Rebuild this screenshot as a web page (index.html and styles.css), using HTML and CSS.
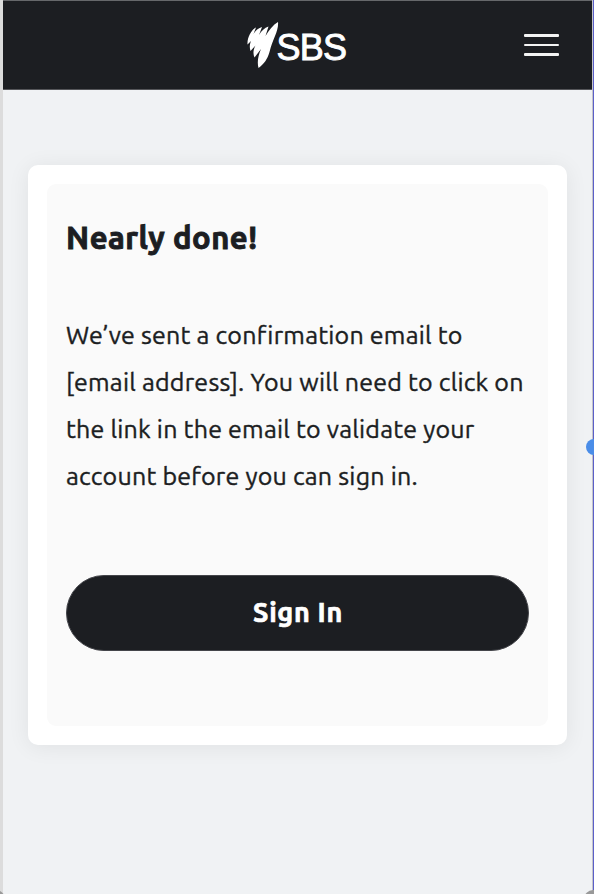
FILE: index.html
```
<!DOCTYPE html>
<html lang="en">
<head>
<meta charset="utf-8">
<title>SBS – Nearly done</title>
<link rel="stylesheet" href="styles.css">
</head>
<body>
<div class="frame">
  <header class="header">
    <div class="logo" role="img" aria-label="SBS">
      <svg class="mark" viewBox="0 0 32 48" width="32" height="48" fill="#fff">
        <path d="M31 1C26 4 22 9 18.500 15L21.500 5.500C17.500 7 14.500 9.500 12 14L15 6C11.500 7 8.500 9.500 6.500 13L9 6.500C4 9 0 17 0.500 23.500L4 20C2.500 24 2.500 27 3.500 30L8.500 24.500C6 29 6 33 7.500 36.500L14 28C11 35 10 41 11.500 47C17 43 20.500 38 22.500 31C24 25 25.500 21 28 15C30 10 31.500 5 31 1Z"/>
      </svg>
      <span class="logo-text">SBS</span>
    </div>
    <button class="menu" aria-label="Menu"><i></i><i></i><i></i></button>
  </header>
  <main class="card">
    <section class="panel">
      <h1>Nearly done!</h1>
      <p class="message">
        <span class="line">We’ve sent a confirmation email to</span>
        <span class="line">[email address]. You will need to click on</span>
        <span class="line">the link in the email to validate your</span>
        <span class="line">account before you can sign in.</span>
      </p>
      <button class="signin">Sign In</button>
    </section>
  </main>
</div>
<i class="handle"></i>
<i class="corner left"></i>
<i class="corner right"></i>
</body>
</html>
```
FILE: styles.css
```
* { box-sizing: border-box; }
body {
  margin: 0;
  width: 594px;
  height: 894px;
  position: relative;
  overflow: hidden;
  background: #5b5fc9;
  font-family: Ubuntu, "Noto Sans", sans-serif;
  color: #1c1e22;
}
.frame {
  width: 593px;
  height: 894px;
  background: #f0f2f4;
  border-left: 3px solid #dcdcdc;
  border-right: 1px solid #c4c5c8;
}
.header {
  height: 90px;
  background: #1c1e22;
  border-top: 1px solid #66686b;
  border-bottom: 1px solid #55565a;
  display: flex;
  align-items: center;
  justify-content: space-between;
  padding: 0 33px 0 244px;
}
.logo { display: flex; align-items: center; }
.mark { display: block; }
.logo-text {
  width: 72px;
  margin-left: -2.5px;
  padding-top: 5px;
  font: 36px/40px "Liberation Sans", sans-serif;
  letter-spacing: -0.8px;
  color: #fff;
  -webkit-text-stroke: 0.9px #fff;
}
.menu {
  width: 35px;
  padding: 0;
  border: 0;
  background: none;
  display: grid;
  gap: 7px;
}
.menu i { height: 2.5px; background: #f4f4f4; border-radius: 1px; }
.card {
  width: 539px;
  height: 580px;
  margin: 75px 0 0 25px;
  padding: 19px;
  background: #fff;
  border-radius: 10px;
  box-shadow: 0 2px 22px rgba(0, 0, 0, 0.07);
}
.panel {
  height: 542px;
  padding: 31px 19px 0;
  background: #fafafa;
  border-radius: 9px;
}
h1 {
  margin: 0;
  font-size: 31px;
  line-height: 46px;
  font-weight: 700;
  letter-spacing: 0.5px;
  white-space: nowrap;
  -webkit-text-stroke: 0.9px #1c1e22;
}
.message {
  margin: 51px 0 0;
  font-size: 25px;
  line-height: 47px;
  letter-spacing: 0.22px;
  -webkit-text-stroke: 0.4px #1c1e22;
}
.line { display: block; width: max-content; white-space: nowrap; }
.signin {
  display: block;
  width: 463px;
  height: 76px;
  margin-top: 74.5px;
  padding: 0 0 2px 1px;
  border: 1px solid #44454a;
  border-radius: 38px;
  background: #1c1e22;
  color: #fff;
  font: 700 27px/72px Ubuntu, "Noto Sans", sans-serif;
  letter-spacing: 0.7px;
  -webkit-text-stroke: 0.7px #fff;
}
.handle {
  position: absolute;
  left: 586px;
  top: 439px;
  width: 16px;
  height: 16px;
  border-radius: 50%;
  background: #4a8de8;
}
.corner {
  position: absolute;
  top: 890px;
  width: 18px;
  height: 18px;
  border-radius: 50%;
  background: #999;
}
.left { left: -13px; }
.right { left: 584px; }
```
